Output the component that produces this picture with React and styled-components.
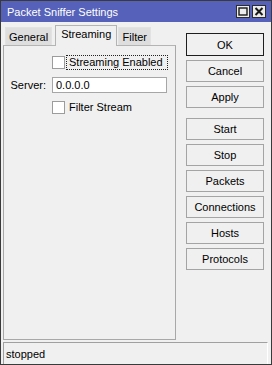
import React from "react";
import styled, { createGlobalStyle } from "styled-components";

const Global = createGlobalStyle`
  html, body { margin: 0; padding: 0; background: #f0f0f0; }
  body { font-family: "Liberation Sans", Arial, sans-serif; font-size: 11px; color: #000; }
  * { box-sizing: border-box; }
`;

const Window = styled.div`
  width: 272px;
  height: 365px;
  border: 1px solid #3a3a3a;
  background: #f0f0f0;
  display: flex;
  flex-direction: column;
`;

const TitleBar = styled.div`
  height: 21px;
  background: #5662ba;
  display: flex;
  align-items: center;
  padding: 0 5px 0 6px;
  color: #fff;
  font-size: 11px;
`;

const Title = styled.div`
  flex: 1;
  padding-top: 1px;
`;

const TitleButtons = styled.div`
  display: flex;
  gap: 2px;
`;

const TitleButton = styled.div`
  width: 14px;
  height: 13px;
  background: #ececec;
  border: 1px solid #2c2c2c;
  display: flex;
  align-items: center;
  justify-content: center;
`;

const Main = styled.div`
  flex: 1;
  display: flex;
  padding: 3px 7px 2px 2px;
  gap: 10px;
`;

const LeftCol = styled.div`
  width: 173px;
  display: flex;
  flex-direction: column;
`;

const TabStrip = styled.div`
  display: flex;
  align-items: flex-end;
  height: 20px;
  padding-left: 2px;
`;

const Tab = styled.div`
  height: ${(p) => (p.$active ? "21px" : "18px")};
  min-width: ${(p) => p.$min || 0}px;
  padding: ${(p) => (p.$active ? "2px 5px 0" : "1px 3px 0")};
  margin-right: ${(p) => (p.$active ? "1px" : "3px")};
  margin-bottom: ${(p) => (p.$active ? "-1px" : "0")};
  background: ${(p) => (p.$active ? "#f0f0f0" : "#dedede")};
  border: 1px solid ${(p) => (p.$active ? "#b4b4b4" : "#e2e2e2")};
  border-bottom: none;
  display: flex;
  justify-content: center;
  align-items: ${(p) => (p.$active ? "flex-start" : "center")};
  z-index: ${(p) => (p.$active ? 1 : 0)};
`;

const Panel = styled.div`
  flex: 1;
  border: 1px solid #a8a8a8;
  border-top-color: #b4b4b4;
  display: grid;
  grid-template-columns: 42px 115px;
  column-gap: 6px;
  row-gap: 7px;
  align-content: start;
  padding: 9px 0 0 0;
`;

const Label = styled.div`
  text-align: right;
  align-self: center;
`;

const CheckRow = styled.div`
  grid-column: 2;
  display: flex;
  align-items: center;
  height: 15px;
`;

const Box = styled.span`
  width: 13px;
  height: 13px;
  border: 1px solid #9c9c9c;
  background: #fff;
  flex: none;
`;

const CheckText = styled.span`
  margin-left: 1px;
  padding: 0 2px;
  height: 15px;
  line-height: 13px;
  border: 1px dotted ${(p) => (p.$focus ? "#222" : "transparent")};
  flex: ${(p) => (p.$focus ? "1" : "none")};
  margin-right: ${(p) => (p.$focus ? "-1px" : "0")};
`;

const Input = styled.div`
  height: 16px;
  background: #fff;
  border: 1px solid #a6a6a6;
  padding: 0 3px;
  line-height: 14px;
`;

const RightCol = styled.div`
  width: 78px;
  display: flex;
  flex-direction: column;
  padding-top: 8px;
  gap: 4px;
`;

const Button = styled.div`
  height: ${(p) => (p.$default ? "23px" : "22px")};
  border: 1px solid ${(p) => (p.$default ? "#1e1e1e" : "#a4a4a4")};
  background: #f0f0f0;
  display: flex;
  align-items: center;
  justify-content: center;
  margin-top: ${(p) => (p.$spaced ? "6px" : "0")};
`;

const StatusBar = styled.div`
  height: 22px;
  margin: 0 3px 0 2px;
  border-top: 1px solid #a0a0a0;
  border-left: 1px solid #a0a0a0;
  border-right: 1px solid #fff;
  display: flex;
  align-items: center;
  padding-left: 2px;
`;

export default function App() {
  return (
    <>
      <Global />
      <Window>
        <TitleBar>
          <Title>Packet Sniffer Settings</Title>
          <TitleButtons>
            <TitleButton>
              <svg width="10" height="9" viewBox="0 0 10 9">
                <rect x="1" y="1" width="8" height="7" fill="none" stroke="#1a1a1a" strokeWidth="1.4" />
              </svg>
            </TitleButton>
            <TitleButton>
              <svg width="10" height="9" viewBox="0 0 10 9">
                <path d="M1.5 1 L8.5 8 M8.5 1 L1.5 8" stroke="#1a1a1a" strokeWidth="2" />
              </svg>
            </TitleButton>
          </TitleButtons>
        </TitleBar>
        <Main>
          <LeftCol>
            <TabStrip>
              <Tab $min={45}>General</Tab>
              <Tab $active $min={60}>Streaming</Tab>
              <Tab $min={33}>Filter</Tab>
            </TabStrip>
            <Panel>
              <CheckRow>
                <Box />
                <CheckText $focus>Streaming Enabled</CheckText>
              </CheckRow>
              <Label>Server:</Label>
              <Input>0.0.0.0</Input>
              <CheckRow>
                <Box />
                <CheckText>Filter Stream</CheckText>
              </CheckRow>
            </Panel>
          </LeftCol>
          <RightCol>
            <Button $default>OK</Button>
            <Button>Cancel</Button>
            <Button>Apply</Button>
            <Button $spaced>Start</Button>
            <Button>Stop</Button>
            <Button>Packets</Button>
            <Button>Connections</Button>
            <Button>Hosts</Button>
            <Button>Protocols</Button>
          </RightCol>
        </Main>
        <StatusBar>stopped</StatusBar>
      </Window>
    </>
  );
}
